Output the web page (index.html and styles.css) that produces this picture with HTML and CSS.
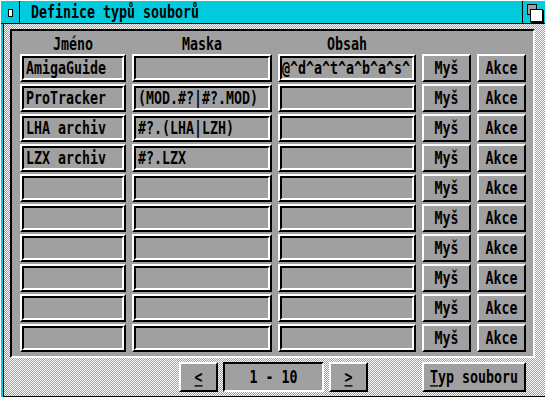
FILE: index.html
```html
<!DOCTYPE html>
<html lang="cs">
<head>
  <meta charset="UTF-8">
  <title>Definice typů souborů</title>
  <link rel="stylesheet" href="styles.css">
</head>
<body>
  <div class="window">
    <!-- title bar -->
    <div class="titlebar">
      <div class="close"><span class="close-box"></span></div>
      <div class="title"><span class="txt">Definice typů souborů</span></div>
      <div class="depth">
        <svg width="22" height="22" viewBox="0 0 22 22" shape-rendering="crispEdges">
          <rect x="4.5" y="3.5" width="9" height="10" fill="#a0a0a0" stroke="#000"/>
          <rect x="7.5" y="8.5" width="12" height="12" fill="#fff" stroke="#000"/>
          <line x1="20" y1="9" x2="20" y2="21" stroke="#000"/>
          <line x1="8" y1="21" x2="21" y2="21" stroke="#000"/>
        </svg>
      </div>
    </div>

    <div class="body">
      <div class="panel">
        <div class="grid">
          <div class="head"><span class="txt">Jméno</span></div>
          <div class="head"><span class="txt">Maska</span></div>
          <div class="head"><span class="txt">Obsah</span></div>
          <div></div>
          <div></div>

          <div class="field"><div class="field-in"><span class="txt">AmigaGuide</span></div></div>
          <div class="field"><div class="field-in"></div></div>
          <div class="field"><div class="field-in tight"><span class="txt">@^d^a^t^a^b^a^s^</span></div></div>
          <div class="btn"><span class="txt">Myš</span></div>
          <div class="btn"><span class="txt">Akce</span></div>

          <div class="field"><div class="field-in"><span class="txt">ProTracker</span></div></div>
          <div class="field"><div class="field-in"><span class="txt">(MOD.#?|#?.MOD)</span></div></div>
          <div class="field"><div class="field-in"></div></div>
          <div class="btn"><span class="txt">Myš</span></div>
          <div class="btn"><span class="txt">Akce</span></div>

          <div class="field"><div class="field-in"><span class="txt">LHA archiv</span></div></div>
          <div class="field"><div class="field-in"><span class="txt">#?.(LHA|LZH)</span></div></div>
          <div class="field"><div class="field-in"></div></div>
          <div class="btn"><span class="txt">Myš</span></div>
          <div class="btn"><span class="txt">Akce</span></div>

          <div class="field"><div class="field-in"><span class="txt">LZX archiv</span></div></div>
          <div class="field"><div class="field-in"><span class="txt">#?.LZX</span></div></div>
          <div class="field"><div class="field-in"></div></div>
          <div class="btn"><span class="txt">Myš</span></div>
          <div class="btn"><span class="txt">Akce</span></div>

          <div class="field"><div class="field-in"></div></div>
          <div class="field"><div class="field-in"></div></div>
          <div class="field"><div class="field-in"></div></div>
          <div class="btn"><span class="txt">Myš</span></div>
          <div class="btn"><span class="txt">Akce</span></div>

          <div class="field"><div class="field-in"></div></div>
          <div class="field"><div class="field-in"></div></div>
          <div class="field"><div class="field-in"></div></div>
          <div class="btn"><span class="txt">Myš</span></div>
          <div class="btn"><span class="txt">Akce</span></div>

          <div class="field"><div class="field-in"></div></div>
          <div class="field"><div class="field-in"></div></div>
          <div class="field"><div class="field-in"></div></div>
          <div class="btn"><span class="txt">Myš</span></div>
          <div class="btn"><span class="txt">Akce</span></div>

          <div class="field"><div class="field-in"></div></div>
          <div class="field"><div class="field-in"></div></div>
          <div class="field"><div class="field-in"></div></div>
          <div class="btn"><span class="txt">Myš</span></div>
          <div class="btn"><span class="txt">Akce</span></div>

          <div class="field"><div class="field-in"></div></div>
          <div class="field"><div class="field-in"></div></div>
          <div class="field"><div class="field-in"></div></div>
          <div class="btn"><span class="txt">Myš</span></div>
          <div class="btn"><span class="txt">Akce</span></div>

          <div class="field"><div class="field-in"></div></div>
          <div class="field"><div class="field-in"></div></div>
          <div class="field"><div class="field-in"></div></div>
          <div class="btn"><span class="txt">Myš</span></div>
          <div class="btn"><span class="txt">Akce</span></div>
        </div>
      </div>

      <!-- paging + type button -->
      <div class="footer">
        <div class="btn nav prev"><span class="txt"><u>&lt;</u></span></div>
        <div class="counter"><span class="txt">1 - 10</span></div>
        <div class="btn nav"><span class="txt"><u>&gt;</u></span></div>
        <div class="btn typ"><span class="txt"><u>T</u>yp souboru</span></div>
      </div>
    </div>
  </div>
</body>
</html>
```

FILE: styles.css
```css
body {
  margin: 0;
  padding: 0;
  background-color: #fff;
  font-family: "DejaVu Sans Mono", "Liberation Mono", monospace;
  font-weight: bold;
  font-size: 13.3px;
  color: #000;
}

.txt {
  display: inline-block;
  line-height: 1;
  white-space: pre;
  transform: scaleY(1.35);
}

.window {
  width: 545px;
  height: 399px;
  box-sizing: border-box;
  display: flex;
  flex-direction: column;
  background-color: #00ccdd;
  border-top: 1px solid #fff;
  border-left: 1px solid #fff;
  border-bottom: 2px solid #fff;
  overflow: hidden;
}

/* title bar */
.titlebar {
  height: 22px;
  display: flex;
  border-bottom: 1px solid #000;
}

.close {
  width: 18px;
  border-right: 1px solid #000;
  display: flex;
  align-items: center;
  justify-content: center;
}

.close-box {
  width: 5px;
  height: 8px;
  box-sizing: border-box;
  border: 1px solid #000;
  background-color: #fff;
  margin-top: 1px;
}

.title {
  flex: 1;
  padding-left: 11px;
  display: flex;
  align-items: center;
}

.depth {
  width: 22px;
  border-left: 1px solid #000;
}

.depth svg {
  display: block;
}

/* window body */
.body {
  flex: 1;
  margin-left: 2px;
  border-left: 1px solid #000;
  border-bottom: 1px solid #000;
  padding: 5px 10px 0 6px;
  background: repeating-conic-gradient(#a0a0a0 0 25%, #fff 0 50%) 0 0 / 2px 2px;
}

.panel {
  height: 329px;
  box-sizing: border-box;
  background-color: #a0a0a0;
  border: 2px solid;
  border-color: #000 #fff #fff #000;
  padding-left: 8px;
}

.grid {
  display: grid;
  grid-template-columns: 106px 140px 138px 49px 49px;
  grid-template-rows: 21px repeat(10, 28px);
  column-gap: 6px;
  row-gap: 2px;
}

.head {
  display: flex;
  justify-content: center;
  align-items: center;
  padding-top: 4px;
}

.field {
  border: 2px solid;
  border-color: #fff #000 #000 #fff;
}

.field-in {
  height: 100%;
  box-sizing: border-box;
  border: 2px solid;
  border-color: #000 #fff #fff #000;
  padding-left: 2px;
  display: flex;
  align-items: center;
  overflow: hidden;
}

.field-in.tight {
  padding-left: 0;
}

.btn {
  box-sizing: border-box;
  border: 2px solid;
  border-color: #fff #000 #000 #fff;
  background-color: #a0a0a0;
  display: flex;
  align-items: center;
  justify-content: center;
}

/* footer */
.footer {
  display: flex;
  height: 30px;
  margin-top: 4px;
}

.nav {
  width: 39px;
  margin-left: 5px;
}

.nav.prev {
  margin-left: 169px;
}

.counter {
  width: 101px;
  margin-left: 5px;
  box-sizing: border-box;
  border: 2px solid;
  border-color: #000 #fff #fff #000;
  background-color: #a0a0a0;
  display: flex;
  align-items: center;
  justify-content: center;
}

.typ {
  width: 104px;
  margin-left: auto;
  margin-right: 9px;
}

u {
  text-underline-offset: 2px;
}
```
